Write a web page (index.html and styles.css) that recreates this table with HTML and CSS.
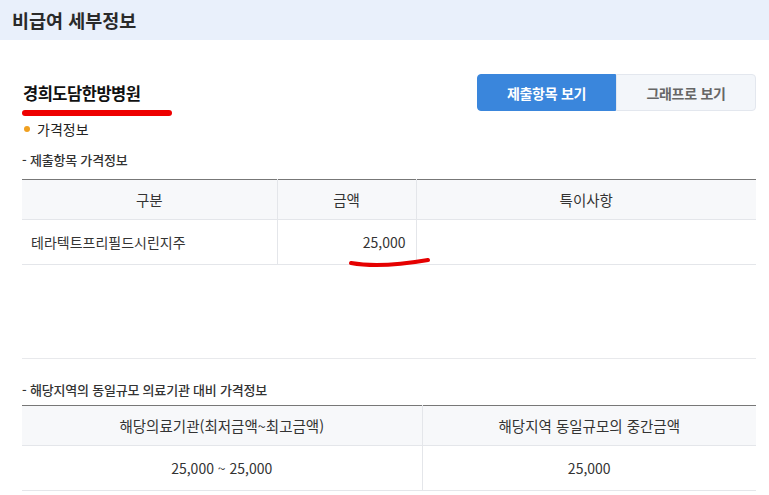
FILE: index.html
```html
<!DOCTYPE html>
<html lang="ko">
<head>
<meta charset="utf-8">
<title>비급여 세부정보</title>
<link rel="stylesheet" href="styles.css">
</head>
<body>
<div class="topbar">비급여 세부정보</div>
<div class="content">
  <div class="title-row">
    <div class="name-block">
      <h2 class="hospital">경희도담한방병원</h2>
      <div class="red-bar"></div>
    </div>
    <div class="tabs">
      <button class="tab active">제출항목 보기</button>
      <button class="tab">그래프로 보기</button>
    </div>
  </div>
  <div class="bullet"><span class="dot"></span>가격정보</div>
  <div class="sub">- 제출항목 가격정보</div>
  <table class="tbl t1">
    <thead>
      <tr><th class="c1">구분</th><th class="c2">금액</th><th class="c3">특이사항</th></tr>
    </thead>
    <tbody>
      <tr><td class="left">테라텍트프리필드시린지주</td><td class="right price">25,000
        <svg class="scribble" width="84" height="12" viewBox="0 0 84 12"><path d="M3 7 C 20 10, 45 10, 80 4" stroke="#e50000" stroke-width="4" fill="none" stroke-linecap="round"/></svg>
      </td><td></td></tr>
    </tbody>
  </table>
  <div class="spacer"></div>
  <div class="sub sub2">- 해당지역의 동일규모 의료기관 대비 가격정보</div>
  <table class="tbl t2">
    <thead>
      <tr><th class="d1">해당의료기관(최저금액~최고금액)</th><th>해당지역 동일규모의 중간금액</th></tr>
    </thead>
    <tbody>
      <tr><td>25,000 ~ 25,000</td><td>25,000</td></tr>
    </tbody>
  </table>
</div>
</body>
</html>
```

FILE: styles.css
```css
* { box-sizing: border-box; }
body {
  margin: 0;
  font-family: "Noto Sans CJK KR", "Noto Sans", sans-serif;
  color: #222;
  background: #fff;
}
.topbar {
  height: 40px;
  line-height: 40px;
  background: #e9f0fb;
  padding-left: 12px;
  font-size: 18.5px;
  font-weight: 700;
  color: #2a2a2a;
}
.content {
  padding: 0 13px 0 22px;
}
.title-row {
  display: flex;
  justify-content: space-between;
  align-items: flex-start;
  margin-top: 34px;
}
.name-block { padding-top: 6px; }
.hospital {
  margin: 0 0 0 1px;
  font-size: 16.5px;
  line-height: 26px;
  font-weight: 700;
  letter-spacing: -0.5px;
  color: #111;
}
.red-bar {
  width: 150px;
  height: 6px;
  background: #ee0000;
  border-radius: 3px;
  margin-top: 4px;
}
.tabs { display: flex; }
.tab {
  font-family: inherit;
  width: 140px;
  height: 37px;
  font-size: 14px;
  font-weight: 700;
  border: 1px solid #e3e7ee;
  background: #f3f6fa;
  color: #666;
  border-radius: 0 4px 4px 0;
  padding: 0;
  letter-spacing: -0.3px;
}
.tab.active {
  width: 139px;
  background: #3a86dc;
  border-color: #3a86dc;
  color: #fff;
  border-radius: 4px 0 0 4px;
}
.bullet {
  display: flex;
  align-items: center;
  font-size: 14px;
  line-height: 20px;
  margin-top: 3px;
  color: #222;
}
.dot {
  width: 6px;
  height: 6px;
  border-radius: 50%;
  background: #f0a020;
  margin: 0 7px 0 2px;
}
.sub {
  font-size: 13px;
  font-weight: 500;
  line-height: 20px;
  margin-top: 11px;
  color: #333;
  letter-spacing: -0.2px;
}
.tbl {
  width: 100%;
  border-collapse: collapse;
  margin-top: 9px;
  border-top: 1px solid #777;
  font-size: 14px;
  color: #333;
}
.tbl th {
  height: 40px;
  background: #f7f8fa;
  font-weight: 400;
  font-size: 14.5px;
  border-bottom: 1px solid #e4e6ea;
  border-right: 1px solid #e4e6ea;
}
.tbl th:last-child, .tbl td:last-child { border-right: none; }
.tbl td {
  height: 45px;
  border-bottom: 1px solid #e4e6ea;
  border-right: 1px solid #e4e6ea;
  text-align: center;
}
.t1 .c1 { width: 255px; }
.t1 .c2 { width: 139px; }
.tbl td.left { text-align: left; padding-left: 9px; }
.tbl td.right { text-align: right; padding-right: 10px; }
.price { position: relative; }
.scribble { position: absolute; left: 70px; top: 36px; }
.spacer {
  height: 94px;
  border-bottom: 1px solid #e8e9ec;
}
.sub2 { margin-top: 21px; }
.t2 { margin-top: 5px; }
.t2 .d1 { width: 400px; }
```
